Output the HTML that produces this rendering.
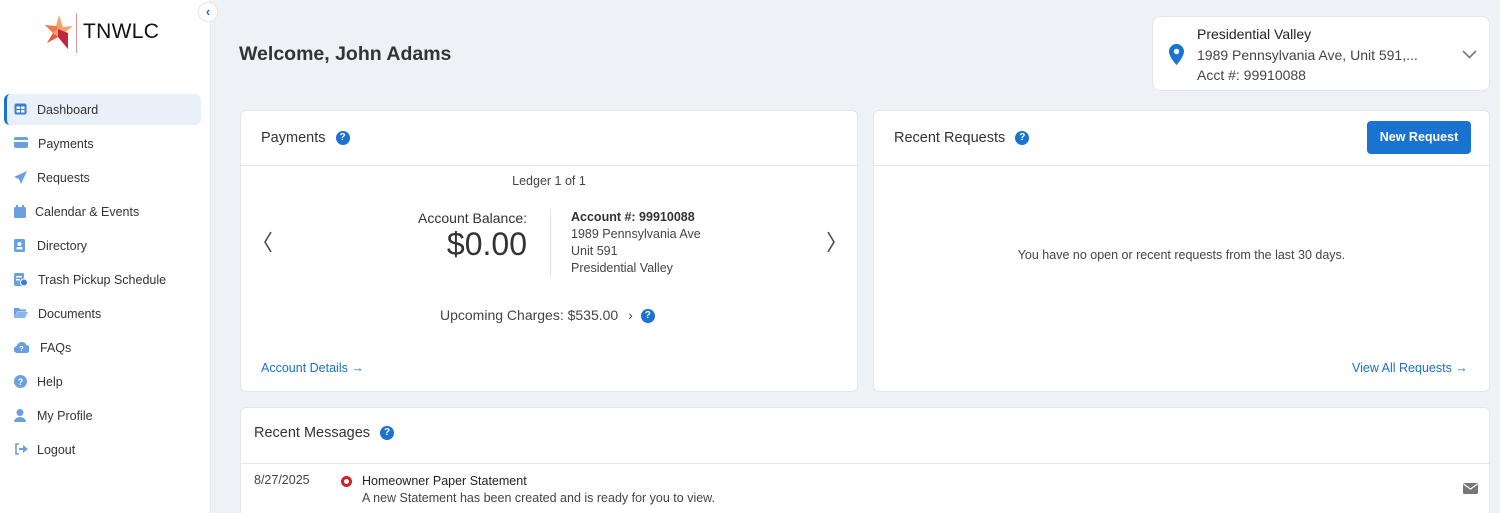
<!DOCTYPE html>
<html style="width:1500px;height:513px;overflow:hidden"><head><meta charset="utf-8"><style>
*{box-sizing:border-box;margin:0;padding:0}
body{width:1500px;height:513px;overflow:hidden;background:#eef1f5;font-family:"Liberation Sans",sans-serif;color:#333;position:relative}
.a{position:absolute}
#side{left:0;top:0;width:211px;height:513px;background:#fff;border-right:1px solid #e3e6ea}
.nav{position:absolute;left:4px;width:197px;height:31px;font-size:12.5px;color:#333;display:flex;align-items:center}
.nav svg{position:absolute;left:10px;top:9px}
.nav span{position:absolute;left:33px}
.card{position:absolute;background:#fff;border:1px solid #e3e6ea;border-radius:6px;overflow:hidden}
.q{display:inline-block;width:14px;height:14px;border-radius:50%;background:#1a73d0;color:#fff;font-size:10px;font-weight:bold;text-align:center;line-height:14px;vertical-align:middle}
.h{position:absolute;font-size:14.5px;color:#333}
.link{position:absolute;font-size:12.5px;color:#1a6fc6}
</style></head><body>
<div id="side" class="a">
 <svg class="a" style="left:44px;top:13px" width="30" height="40" viewBox="0 0 30 40">
  <polygon points="15,2 19,14 29,13 20,20 24,36 14,24 3,30 9,20 1,12 12,13" fill="#f4a46a"/>
  <polygon points="14,16 24,20 24,36 14,24" fill="#c0283c"/>
  <polygon points="3,30 9,20 14,24" fill="#e8583c"/>
  <polygon points="1,12 12,13 14,16 9,20" fill="#f07a4a"/>
 </svg>
 <div class="a" style="left:76px;top:13px;width:1px;height:40px;background:#d89a9a"></div>
 <div class="a" style="left:83px;top:20px;font-size:21px;color:#111;letter-spacing:0.3px">TNWLC</div>
 <div class="a" style="left:198px;top:2px;width:20px;height:20px;border-radius:50%;background:#fff;border:1px solid #e3e6ea;color:#1a6fc6;font-size:13px;text-align:center;line-height:18px;font-weight:bold">‹</div>
 <div class="nav" style="top:94px;background:#e8f0fa;border-radius:6px;border-left:3px solid #1a73d0"><svg width="13" height="12" style="left:7px"><rect x="0.5" y="0.5" width="12" height="11" rx="2" fill="#3a7fd0"/><rect x="2.5" y="3.5" width="3.5" height="2.5" fill="#fff"/><rect x="7" y="3.5" width="3.5" height="2.5" fill="#fff"/><rect x="2.5" y="7" width="3.5" height="2.5" fill="#fff"/><rect x="7" y="7" width="3.5" height="2.5" fill="#fff"/></svg><span style="left:30px">Dashboard</span></div>
 <div class="nav" style="top:128px"><svg width="14" height="11"><rect width="14" height="11" rx="2" fill="#6aa0e0"/><rect y="3" width="14" height="2" fill="#fff"/></svg><span style="left:34px">Payments</span></div>
 <div class="nav" style="top:162px"><svg width="13" height="13"><polygon points="13,0 0,6 5,8 7,13" fill="#6aa0e0"/></svg><span>Requests</span></div>
 <div class="nav" style="top:196px"><svg width="12" height="13"><rect y="2" width="12" height="11" rx="1.5" fill="#6aa0e0"/><rect x="2" y="0" width="2" height="3" fill="#6aa0e0"/><rect x="8" y="0" width="2" height="3" fill="#6aa0e0"/></svg><span style="left:31px">Calendar &amp; Events</span></div>
 <div class="nav" style="top:230px"><svg width="12" height="13"><rect width="11" height="13" rx="1.5" fill="#6aa0e0"/><circle cx="5.5" cy="5" r="2" fill="#fff"/><rect x="2.5" y="8" width="6" height="2.5" rx="1" fill="#fff"/></svg><span>Directory</span></div>
 <div class="nav" style="top:264px"><svg width="14" height="13"><rect width="10" height="13" rx="1.5" fill="#6aa0e0"/><rect x="2" y="3" width="6" height="1.5" fill="#fff"/><rect x="2" y="6" width="4" height="1.5" fill="#fff"/><circle cx="10" cy="9.5" r="3.5" fill="#3a7fd0" stroke="#fff"/></svg><span style="left:34px">Trash Pickup Schedule</span></div>
 <div class="nav" style="top:298px"><svg width="14" height="12"><path d="M0 1h5l1.5 1.5H12v2H3L0 11z" fill="#6aa0e0"/><path d="M3 5h11l-3 6H0z" fill="#8ab6ea"/></svg><span style="left:34px">Documents</span></div>
 <div class="nav" style="top:332px"><svg width="15" height="12"><path d="M3.5 12A3.5 3.5 0 0 1 3 5a5 5 0 0 1 9.5-1A4 4 0 0 1 12 12z" fill="#6aa0e0"/><text x="7.5" y="10" font-size="7" fill="#fff" text-anchor="middle" font-weight="bold" font-family="Liberation Sans">?</text></svg><span style="left:36px">FAQs</span></div>
 <div class="nav" style="top:366px"><svg width="13" height="13"><circle cx="6.5" cy="6.5" r="6.5" fill="#6aa0e0"/><text x="6.5" y="10" font-size="9" fill="#fff" text-anchor="middle" font-weight="bold" font-family="Liberation Sans">?</text></svg><span>Help</span></div>
 <div class="nav" style="top:400px"><svg width="12" height="13"><circle cx="6" cy="3.5" r="3.5" fill="#6aa0e0"/><path d="M0 13a6 5 0 0 1 12 0z" fill="#6aa0e0"/></svg><span>My Profile</span></div>
 <div class="nav" style="top:434px"><svg width="14" height="12"><path d="M5 1H2v10h3" stroke="#6aa0e0" stroke-width="1.6" fill="none"/><path d="M5 5h4V2l5 4-5 4V7H5z" fill="#6aa0e0"/></svg><span>Logout</span></div>
</div>

<div class="a" style="left:239px;top:43px;font-size:19.5px;font-weight:bold;color:#333">Welcome, John Adams</div>

<div class="card" style="left:1152px;top:16px;width:338px;height:75px;border-radius:8px">
 <svg class="a" style="left:16px;top:27px" width="15" height="21" viewBox="0 0 15 21"><path d="M7.5 0A7.5 7.5 0 0 0 0 7.5C0 13 7.5 21 7.5 21S15 13 15 7.5A7.5 7.5 0 0 0 7.5 0z" fill="#1a73d0"/><circle cx="7.5" cy="7.5" r="2.7" fill="#fff"/></svg>
 <div class="a" style="left:44px;top:7px;font-size:14px;color:#222;line-height:20.5px">Presidential Valley<br><span style="color:#444">1989 Pennsylvania Ave, Unit 591,...</span><br><span style="color:#444">Acct #: 99910088</span></div>
 <svg class="a" style="left:309px;top:33px" width="15" height="9"><path d="M1 1l6.5 6.5L14 1" stroke="#777" stroke-width="1.6" fill="none"/></svg>
</div>

<div class="card" style="left:240px;top:110px;width:618px;height:282px">
 <div class="h" style="left:20px;top:19px">Payments <span class="q" style="margin-left:6px">?</span></div>
 <div class="a" style="left:0;top:54px;width:616px;height:1px;background:#e6e8eb"></div>
 <div class="a" style="left:0;top:63px;width:616px;text-align:center;font-size:12.5px;color:#444">Ledger 1 of 1</div>
 <svg class="a" style="left:22px;top:120px" width="10" height="22"><path d="M8 1L2 11l6 10" stroke="#444" stroke-width="1.5" fill="none"/></svg>
 <svg class="a" style="left:585px;top:120px" width="10" height="22"><path d="M2 1l6 10-6 10" stroke="#444" stroke-width="1.5" fill="none"/></svg>
 <div class="a" style="right:330px;top:99px;text-align:right;font-size:14px;color:#333">Account Balance:<div style="font-size:32px;color:#333;margin-top:0px">$0.00</div></div>
 <div class="a" style="left:309px;top:98px;width:1px;height:67px;background:#e0e2e5"></div>
 <div class="a" style="left:330px;top:98px;font-size:12.5px;color:#444;line-height:17px"><b style="color:#333">Account #: 99910088</b><br>1989 Pennsylvania Ave<br>Unit 591<br>Presidential Valley</div>
 <div class="a" style="left:199px;top:196px;font-size:14px;color:#444">Upcoming Charges: $535.00 <span style="margin:0 8px 0 6px">›</span><span class="q">?</span></div>
 <div class="link" style="left:20px;top:250px">Account Details →</div>
</div>

<div class="card" style="left:873px;top:110px;width:617px;height:282px">
 <div class="h" style="left:20px;top:19px">Recent Requests <span class="q" style="margin-left:6px">?</span></div>
 <div class="a" style="left:493px;top:10px;width:104px;height:33px;background:#1a73d0;border-radius:4px;color:#fff;font-size:12.5px;font-weight:bold;text-align:center;line-height:33px">New Request</div>
 <div class="a" style="left:0;top:54px;width:615px;height:1px;background:#e6e8eb"></div>
 <div class="a" style="left:0;top:137px;width:615px;text-align:center;font-size:12.5px;color:#444">You have no open or recent requests from the last 30 days.</div>
 <div class="link" style="left:478px;top:250px">View All Requests →</div>
</div>

<div class="card" style="left:240px;top:407px;width:1250px;height:106px;border-bottom:none;border-radius:6px 6px 0 0">
 <div class="h" style="left:13px;top:17px">Recent Messages <span class="q" style="margin-left:6px">?</span></div>
 <div class="a" style="left:0;top:55px;width:1248px;height:1px;background:#e6e8eb"></div>
 <div class="a" style="left:13px;top:65px;font-size:12.5px;color:#444">8/27/2025</div>
 <div class="a" style="left:100px;top:68px;width:11px;height:11px;border-radius:50%;border:3px solid #d0202a;background:#fff"></div>
 <div class="a" style="left:121px;top:65px;font-size:12.5px;color:#333;line-height:17px"><span style="color:#222">Homeowner Paper Statement</span><br><span style="color:#444">A new Statement has been created and is ready for you to view.</span></div>
 <svg class="a" style="left:1222px;top:75px" width="15" height="11"><rect width="15" height="11" rx="1.5" fill="#777"/><path d="M0.5 1l7 5 7-5" stroke="#fff" stroke-width="1.2" fill="none"/></svg>
</div>
</body></html>
